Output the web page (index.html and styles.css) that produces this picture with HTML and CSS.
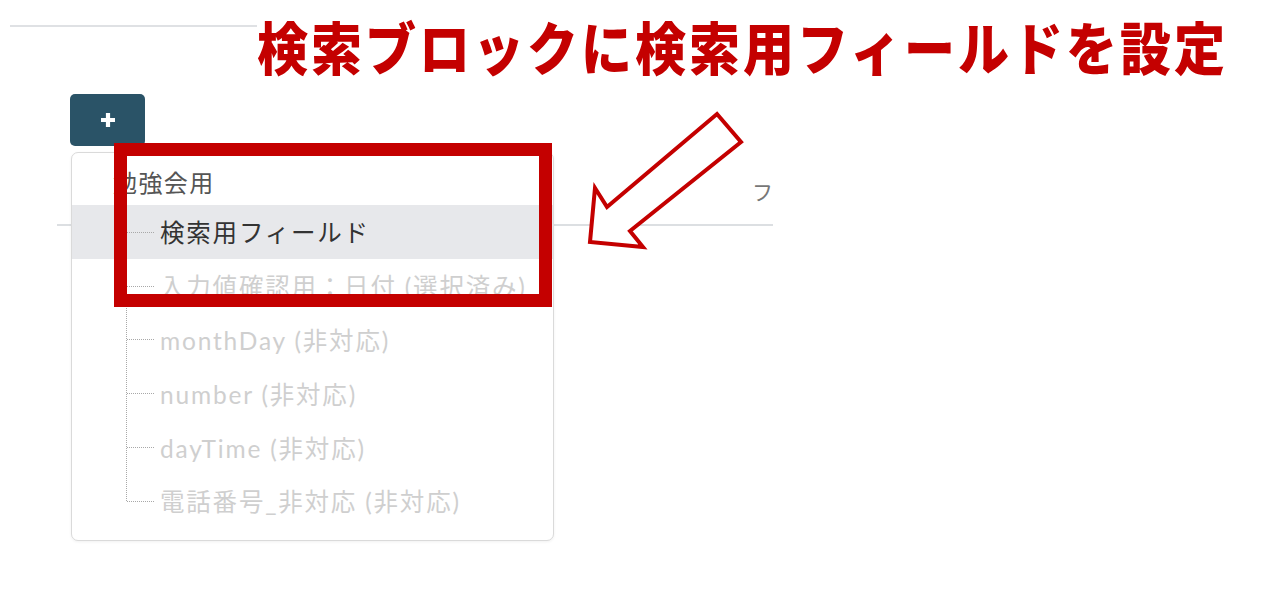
FILE: index.html
```html
<!DOCTYPE html>
<html lang="ja">

<head>
    <meta charset="UTF-8">
    <meta name="viewport" content="width=device-width, initial-scale=1.0">
    <title>検索ブロック</title>
    <link rel="stylesheet" href="styles.css">
</head>

<body>

    <div class="top-rule"></div>

    <!-- ツールバー -->
    <div class="toolbar">
        <button class="add-btn" type="button">
            <svg width="18" height="18" viewBox="0 0 18 18">
                <path d="M9 2v14M2 9h14" stroke="#fff" stroke-width="4.2" />
            </svg>
        </button>
    </div>

    <div class="grid-head">
        <span class="grid-head-label">フ</span>
    </div>

    <!-- フィールド選択メニュー -->
    <div class="field-menu">
        <div class="menu-group">勉強会用</div>
        <ul class="menu-tree">
            <li class="menu-item is-active">検索用フィールド</li>
            <li class="menu-item is-disabled">入力値確認用：日付 (選択済み)</li>
            <li class="menu-item is-disabled">monthDay (非対応)</li>
            <li class="menu-item is-disabled">number (非対応)</li>
            <li class="menu-item is-disabled">dayTime (非対応)</li>
            <li class="menu-item is-disabled is-last">電話番号_非対応 (非対応)</li>
        </ul>
    </div>

    <!-- 注釈 -->
    <div class="note-title">検索ブロックに検索用フィールドを設定</div>
    <div class="note-box"></div>
    <svg class="note-arrow" width="170" height="150" viewBox="580 105 170 150">
        <path d="M717 114 L741 142 L630 231 L643 247 L590 242 L595 188 L607 207 Z"
            fill="#fff" stroke="#c40000" stroke-width="4" stroke-linejoin="miter" />
    </svg>

</body>

</html>
```

FILE: styles.css
```css
* {
    margin: 0;
    padding: 0;
    box-sizing: border-box;
}

body {
    background: #fff;
    font-family: Lato, "Noto Sans CJK JP", sans-serif;
    color: #555;
    width: 1263px;
    height: 602px;
    overflow: hidden;
    position: relative;
}

/* 上部の区切り線 */
.top-rule {
    margin: 25px 0 0 10px;
    width: 262px;
    border-top: 2px solid #dfe1e4;
}

.toolbar {
    padding: 67px 0 0 70px;
    display: flex;
}

.add-btn {
    width: 75px;
    height: 52px;
    border: none;
    border-radius: 5px;
    background: #2a5367;
    display: flex;
    align-items: center;
    justify-content: center;
}

/* メニューの後ろにある一覧ヘッダー */
.grid-head {
    margin-left: 57px;
    width: 716px;
    height: 80px;
    border-bottom: 2px solid #dcdfe2;
    display: flex;
    align-items: center;
    justify-content: flex-end;
    padding-top: 12px;
}

.grid-head-label {
    font-size: 21px;
    color: #777;
}

/* フィールド選択メニュー */
.field-menu {
    position: absolute;
    left: 71px;
    top: 152px;
    width: 483px;
    height: 389px;
    background: #fff;
    border: 1.5px solid #dadada;
    border-radius: 7px;
    box-shadow: 0 1px 3px rgba(0, 0, 0, 0.06);
}

.menu-group {
    height: 52px;
    padding-left: 41px;
    display: flex;
    align-items: center;
    font-size: 24px;
    letter-spacing: 1.4px;
    color: #555;
    padding-top: 4px;
}

.menu-tree {
    list-style: none;
    position: relative;
}

/* ツリーの縦線 */
.menu-tree::before {
    content: '';
    position: absolute;
    left: 54px;
    top: -4px;
    height: 300px;
    border-left: 1.5px dotted #a8a8a8;
}

.menu-item {
    height: 53.8px;
    padding-left: 88px;
    display: flex;
    align-items: center;
    font-size: 24.5px;
    letter-spacing: 1.8px;
    position: relative;
    white-space: nowrap;
}

/* ツリーの横線 */
.menu-item::before {
    content: '';
    position: absolute;
    left: 55px;
    top: 50%;
    width: 27px;
    border-top: 1.5px dotted #a8a8a8;
}

.menu-item.is-active {
    background: #e7e8eb;
    color: #333;
}

.menu-item.is-disabled {
    color: #cfcfcf;
}

/* 注釈 */
.note-title {
    position: absolute;
    left: 257px;
    top: 12px;
    font-family: "Noto Sans CJK JP", sans-serif;
    font-weight: 900;
    font-size: 51px;
    letter-spacing: 3px;
    color: #c40000;
    background: #fff;
    white-space: nowrap;
    line-height: 60px;
    transform: scaleY(1.12);
    transform-origin: top left;
}

.note-box {
    position: absolute;
    left: 114px;
    top: 143px;
    width: 438px;
    height: 164px;
    border: 13px solid #c40000;
}

.note-arrow {
    position: absolute;
    left: 580px;
    top: 105px;
}
```
